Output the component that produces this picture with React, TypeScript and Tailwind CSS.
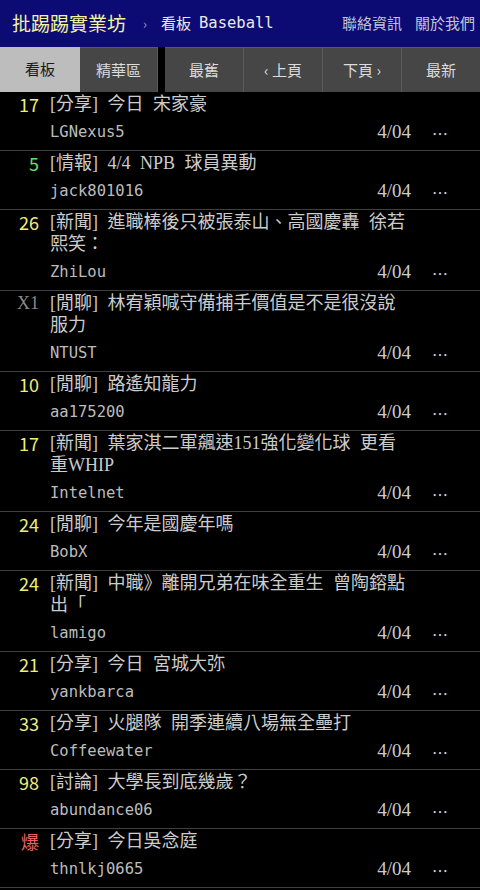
import React from "react";

type Row = { n: string; c: string; title: string; author: string; date: string };

const rows: Row[] = [
  { n: "17", c: "text-[#eeee7a]", title: "[分享] 今日 宋家豪", author: "LGNexus5", date: "4/04" },
  { n: "5", c: "text-[#66e066]", title: "[情報] 4/4 NPB 球員異動", author: "jack801016", date: "4/04" },
  { n: "26", c: "text-[#eeee7a]", title: "[新聞] 進職棒後只被張泰山、高國慶轟 徐若熙笑：", author: "ZhiLou", date: "4/04" },
  { n: "X1", c: "text-[#8a8a8a]", title: "[閒聊] 林宥穎喊守備捕手價值是不是很沒說服力", author: "NTUST", date: "4/04" },
  { n: "10", c: "text-[#eeee7a]", title: "[閒聊] 路遙知龍力", author: "aa175200", date: "4/04" },
  { n: "17", c: "text-[#eeee7a]", title: "[新聞] 葉家淇二軍飆速151強化變化球 更看重WHIP", author: "Intelnet", date: "4/04" },
  { n: "24", c: "text-[#eeee7a]", title: "[閒聊] 今年是國慶年嗎", author: "BobX", date: "4/04" },
  { n: "24", c: "text-[#eeee7a]", title: "[新聞] 中職》離開兄弟在味全重生 曾陶鎔點出「", author: "lamigo", date: "4/04" },
  { n: "21", c: "text-[#eeee7a]", title: "[分享] 今日 宮城大弥", author: "yankbarca", date: "4/04" },
  { n: "33", c: "text-[#eeee7a]", title: "[分享] 火腿隊 開季連續八場無全壘打", author: "Coffeewater", date: "4/04" },
  { n: "98", c: "text-[#eeee7a]", title: "[討論] 大學長到底幾歲？", author: "abundance06", date: "4/04" },
  { n: "爆", c: "text-[#f06060]", title: "[分享] 今日吳念庭", author: "thnlkj0665", date: "4/04" },
];

const serif = { fontFamily: '"Liberation Serif","Noto Sans CJK TC",serif' };
const sans = { fontFamily: '"Noto Sans CJK TC","Noto Sans",sans-serif' };
const mono = { fontFamily: '"DejaVu Sans Mono","Noto Sans CJK TC",monospace' };

export default function App() {
  return (
    <div className="min-h-screen w-[480px] bg-black" style={sans}>
      <div className="flex h-[47px] items-center bg-[#0c0b74] pl-[12px] pr-[5px]">
        <span className="text-[19px] text-[#f4f4a0]">批踢踢實業坊</span>
        <span className="ml-[17px] text-[13px] text-[#9a9ab0]">›</span>
        <span className="ml-[14px] text-[15px] text-[#e8e8e8]">看板</span>
        <span className="ml-[8px] text-[15.5px] text-[#e8e8e8]" style={mono}>Baseball</span>
        <span className="ml-auto text-[15px] text-[#c4c4d4]">聯絡資訊</span>
        <span className="ml-[13px] text-[15px] text-[#c4c4d4]">關於我們</span>
      </div>
      <div className="flex h-[45px] text-[15px]">
        <div className="flex w-[158px]">
          <div className="flex w-[80px] items-center justify-center bg-[#bdbdbd] text-[#1a1a1a]">看板</div>
          <div className="flex flex-1 items-center justify-center border-r border-t border-[#5a5a5a] bg-[#464646] text-[#dcdcdc]">精華區</div>
        </div>
        <div className="ml-[7px] flex flex-1">
          <div className="flex flex-1 items-center justify-center border-r border-t border-[#5a5a5a] bg-[#464646] text-[#dcdcdc]">最舊</div>
          <div className="flex flex-1 items-center justify-center border-r border-t border-[#5a5a5a] bg-[#464646] text-[#dcdcdc]">‹ 上頁</div>
          <div className="flex flex-1 items-center justify-center border-r border-t border-[#5a5a5a] bg-[#464646] text-[#dcdcdc]">下頁 ›</div>
          <div className="flex flex-1 items-center justify-center border-t border-[#5a5a5a] bg-[#464646] text-[#dcdcdc]">最新</div>
        </div>
      </div>
      <div>
        {rows.map((r, i) => (
          <div key={i} className="flex border-b border-[#404040] pt-[1px]">
            <div className={`w-[39px] text-right text-[18px] leading-[22px] ${r.c}`} style={r.n === "X1" ? serif : sans}>
              {r.n}
            </div>
            <div className="ml-[11px] mr-[32px] flex-1">
              <div className="pr-[38px] text-[18px] leading-[22px] text-[#cccccc] [word-spacing:5px]" style={serif}>
                {r.title}
              </div>
              <div className="flex h-[35px] items-center">
                <span className="flex-1 text-[15.5px] text-[#bcbcbc]" style={mono}>{r.author}</span>
                <span className="text-[19px] text-[#cccccc]" style={serif}>{r.date}</span>
                <span className="ml-[21px] w-[16px] text-[16px] text-[#d0d0d0]" style={sans}>⋯</span>
              </div>
            </div>
          </div>
        ))}
      </div>
    </div>
  );
}
